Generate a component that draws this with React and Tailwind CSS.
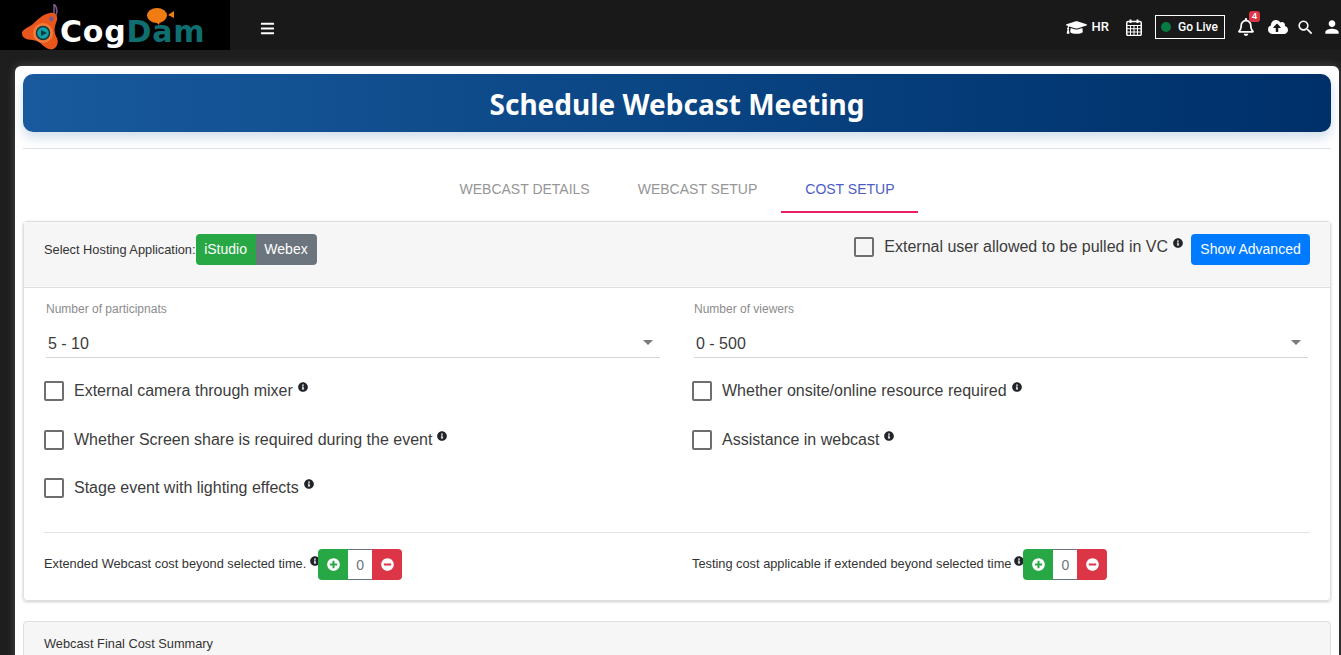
import { FaBars, FaGraduationCap, FaRegBell, FaCloudUploadAlt, FaInfoCircle, FaPlusCircle, FaMinusCircle } from "react-icons/fa";
import { MdSearch, MdPerson, MdArrowDropDown } from "react-icons/md";

// logo mark drawn by hand
const LogoMark = () => (
  <svg width="42" height="47" viewBox="0 0 42 47" className="shrink-0">
    <path d="M33 0 C36 3 37 6 35 11 L33 12 Z" fill="none" stroke="#7a5a8c" strokeWidth="1.5" />
    <path d="M29 9 C35 8 38 13 35 19 C33 24 33 29 36 34 C39 41 33 47 28 45 C23 44 21 39 16 37 C11 35 2 37 1 30 C0 25 8 24 13 19 C18 14 23 10 29 9Z" fill="#e8561b" />
    <circle cx="22" cy="29" r="10" fill="#f47a3a" />
    <circle cx="22" cy="29" r="6.5" fill="#13a0a6" stroke="#0c3b40" strokeWidth="1.5" />
    <path d="M20 26 L26 29 L20 32Z" fill="#0c3b40" />
    <path d="M29 12 L33 14 L31 18 L28 16Z" fill="#7a5a8c" />
  </svg>
);

const SpeechFish = () => (
  <svg width="28" height="18" viewBox="0 0 28 18" className="absolute left-[147px] top-[8px]">
    <ellipse cx="10" cy="7.5" rx="10" ry="7.5" fill="#f07d14" />
    <path d="M9 14 L12 17 L13 13Z" fill="#f07d14" />
    <path d="M21 7 L27 3 L27 10Z" fill="#f07d14" />
  </svg>
);

const CalendarIcon = () => (
  <svg width="16" height="17" viewBox="0 0 16 17" className="ml-[17px]" fill="none" stroke="currentColor">
    <rect x="0.75" y="2.5" width="14.5" height="14" rx="1.5" strokeWidth="1.5" />
    <path d="M1 6.5H15M1 9.75H15M1 13H15M4.5 6.5V16.5M8 6.5V16.5M11.5 6.5V16.5" strokeWidth="1" />
    <path d="M4.5 0.5V4M11.5 0.5V4" strokeWidth="2" />
  </svg>
);

const Info = ({ className = "" }) => <FaInfoCircle className={`text-[#212529] text-[10px] shrink-0 ${className}`} />;

const Check = ({ label, className = "" }) => (
  <div className={`flex items-center ${className}`}>
    <span className="w-5 h-5 border-2 border-[#6e6e6e] rounded-[2px] shrink-0" />
    <span className="ml-[10px] text-base text-[#3c3c3c] leading-6">{label}</span>
    <Info className="ml-[5px] -mt-2" />
  </div>
);

const SelectField = ({ label, value, className = "" }) => (
  <div className={className}>
    <div className="text-xs text-[#8c8c8c] leading-4">{label}</div>
    <div className="mt-[9px] h-[32px] border-b border-[#d5d5d5] flex items-center justify-between pl-[2px]">
      <span className="text-base text-[#3c3c3c] mt-[5px]">{value}</span>
      <MdArrowDropDown className="text-2xl text-[#7a7a7a]" />
    </div>
  </div>
);

const Stepper = ({ className = "" }) => (
  <div className={`flex h-[31px] shrink-0 ${className}`}>
    <div className="w-[30px] bg-[#28a745] rounded-l flex items-center justify-center">
      <FaPlusCircle className="text-white text-[13px]" />
    </div>
    <div className="w-[24px] border-y border-[#6c757d] bg-white flex items-center justify-center text-sm text-[#6c757d]">0</div>
    <div className="w-[30px] bg-[#dc3545] rounded-r flex items-center justify-center">
      <FaMinusCircle className="text-white text-[13px]" />
    </div>
  </div>
);

export default function App() {
  return (
    <div className="h-[655px] overflow-hidden bg-[#1e1e1e] font-['Liberation_Sans',Arial,sans-serif]">
      {/* top bar */}
      <header className="h-[50px] bg-[#191919] flex items-center text-white">
        <div className="relative w-[230px] h-full bg-black flex items-start pl-[21px] pt-[4px]">
          <LogoMark />
          <span className="-ml-[3px] mt-[13px] text-[30px] font-bold tracking-[0.8px] font-['DejaVu_Sans',sans-serif] leading-none">
            <span className="text-white">Cog</span>
            <span className="text-[#0f6f70]">Dam</span>
          </span>
          <SpeechFish />
        </div>
        <FaBars className="ml-[30px] mt-[6px] text-[15px]" />
        <div className="ml-auto flex items-center h-full pt-[4px] -mr-px">
          <FaGraduationCap className="text-[21px]" />
          <span className="ml-[5px] text-[13px] font-medium font-['Roboto',sans-serif]">HR</span>
          <CalendarIcon />
          <div className="ml-[13px] w-[70px] h-6 border border-white flex items-center pl-[5px]">
            <span className="w-[10px] h-[10px] rounded-full bg-[#0a7a43]" />
            <span className="ml-[7px] text-xs font-medium font-['Roboto',sans-serif]">Go Live</span>
          </div>
          <div className="relative ml-[12px]">
            <FaRegBell className="text-[18px]" />
            <span className="absolute -top-[7px] left-[12px] w-[11px] h-[11px] rounded-[3px] bg-[#dc3545] text-[9px] font-bold flex items-center justify-center">4</span>
          </div>
          <FaCloudUploadAlt className="ml-[13px] text-xl" />
          <MdSearch className="ml-[8px] text-[19px]" />
          <MdPerson className="ml-[7px] text-[20px]" />
        </div>
      </header>

      {/* page card */}
      <main className="mt-4 ml-[15px] mr-[2px] bg-white rounded-md pt-2 px-2 shadow-[0_0_10px_rgba(255,255,255,0.2)]">
        <div className="h-[58px] rounded-[10px] bg-gradient-to-r from-[#185a9d] to-[#00306a] flex items-center justify-center shadow-[0_6px_12px_rgba(24,90,157,0.2)]">
          <h1 className="mt-[2px] text-[28px] font-bold text-white font-['Noto_Sans',sans-serif]">Schedule Webcast Meeting</h1>
        </div>
        <div className="mt-4 border-t border-[#dee2e6]" />

        {/* tabs */}
        <div className="h-[64px] flex justify-center text-sm">
          <div className="mt-[20px] flex">
            <div className="h-[44px] px-6 pt-[10px] text-[#969696]">WEBCAST DETAILS</div>
            <div className="h-[44px] px-6 pt-[10px] text-[#969696]">WEBCAST SETUP</div>
            <div className="h-[44px] px-6 pt-[10px] text-[#4b5cc4] border-b-2 border-[#e91e63]">COST SETUP</div>
          </div>
        </div>

        {/* cost setup panel */}
        <section className="mt-[8px] border border-[#dfdfdf] rounded shadow-[0_1px_3px_rgba(0,0,0,0.2)]">
          <div className="h-[66px] bg-[#f6f6f6] border-b border-[#dfdfdf] flex pl-5 pr-5">
            <div className="flex items-center self-start mt-3">
              <span className="text-[12.8px] text-[#333]">Select Hosting Application:</span>
              <div className="flex h-[31px] text-sm text-white">
                <span className="w-[60px] pb-px bg-[#28a745] rounded-l flex items-center justify-center">iStudio</span>
                <span className="w-[61px] pb-px bg-[#6c757d] rounded-r flex items-center justify-center">Webex</span>
              </div>
            </div>
            <div className="ml-auto flex items-start pt-3">
              <div className="flex items-center h-[24px] mt-px">
                <span className="w-5 h-5 border-2 border-[#6e6e6e] rounded-[2px] shrink-0" />
                <span className="ml-[10px] text-base text-[#3c3c3c]">External user allowed to be pulled in VC</span>
                <Info className="ml-[5px] -mt-2" />
              </div>
              <button className="ml-[8px] h-[31px] w-[119px] pb-px bg-[#007bff] rounded text-white text-sm">Show Advanced</button>
            </div>
          </div>

          <div className="pt-[13px] px-5 pb-[20px]">
            <div className="flex px-[2px]">
              <SelectField className="w-[614px]" label="Number of participnats" value="5 - 10" />
              <SelectField className="flex-1 ml-[34px]" label="Number of viewers" value="0 - 500" />
            </div>
            <div className="mt-[21px] flex">
              <div className="w-[648px]">
                <Check label="External camera through mixer" />
                <Check label="Whether Screen share is required during the event" className="mt-[25px]" />
                <Check label="Stage event with lighting effects" className="mt-[24px]" />
              </div>
              <div>
                <Check label="Whether onsite/online resource required" />
                <Check label="Assistance in webcast" className="mt-[25px]" />
              </div>
            </div>
            <div className="mt-[32px] border-t border-[#e3e3e3]" />
            <div className="mt-[16px] flex">
              <div className="w-[648px] flex items-center">
                <span className="text-[12.8px] text-[#333] -mt-px">Extended Webcast cost beyond selected time.</span>
                <Info className="ml-[4px] -mt-2" />
                <Stepper className="-ml-[2px]" />
              </div>
              <div className="flex items-center">
                <span className="text-[12.8px] text-[#333] -mt-px">Testing cost applicable if extended beyond selected time</span>
                <Info className="ml-[3px] -mt-2" />
                <Stepper className="-ml-px" />
              </div>
            </div>
          </div>
        </section>

        {/* summary panel, cut off by the window */}
        <section className="mt-[20px] border border-[#dfdfdf] rounded-t bg-[#f6f6f6] h-[60px] pl-5 pt-[12px] text-[12.8px] text-[#333]">
          Webcast Final Cost Summary
        </section>
      </main>
    </div>
  );
}
